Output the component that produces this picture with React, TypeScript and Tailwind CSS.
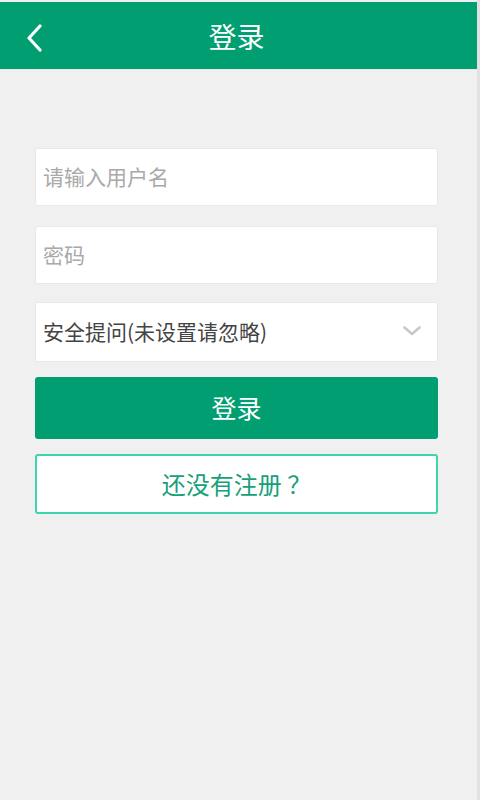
export default function App() {
  const font = { fontFamily: '"Noto Sans CJK SC", "Noto Sans", sans-serif' };

  return (
    <div className="flex h-[800px] w-[480px] bg-[#f0f0f0]" style={font}>
      <div className="flex w-[477px] flex-col pt-[2px]">
        {/* header */}
        <div className="relative flex h-[68px] items-center justify-center border-b border-[#e8e8e8] bg-[#009e71]">
          <button className="absolute left-[22px] top-[20px] flex h-[32px] w-[24px] items-center justify-center">
            <svg width="18" height="28" viewBox="0 0 18 28" fill="none">
              <path d="M15 2 L4 14 L15 26" stroke="white" strokeWidth="3.2" strokeLinecap="round" strokeLinejoin="round" />
            </svg>
          </button>
          <h1 className="ml-[-4px] text-[28px] leading-none text-white">登录</h1>
        </div>

        {/* form */}
        <div className="flex flex-col pl-[35px] pr-[39px] pt-[78px]">
          <div className="flex h-[58px] items-center rounded-[3px] border border-[#e8e8e8] bg-white px-[7px]">
            <input
              className="w-full bg-transparent text-[21px] text-[#333] outline-none placeholder:text-[#a9a9a9]"
              placeholder="请输入用户名"
            />
          </div>
          <div className="mt-[20px] flex h-[58px] items-center rounded-[3px] border border-[#e8e8e8] bg-white px-[7px]">
            <input
              type="password"
              className="w-full bg-transparent text-[21px] text-[#333] outline-none placeholder:text-[#a9a9a9]"
              placeholder="密码"
            />
          </div>
          <div className="mt-[18px] flex h-[60px] items-center justify-between rounded-[3px] border border-[#e8e8e8] bg-white pl-[7px] pr-[16px]">
            <span className="text-[21px] text-[#444]">安全提问(未设置请忽略)</span>
            <svg width="18" height="10" viewBox="0 0 18 10" fill="none" className="mb-[2px]">
              <path d="M1.5 1.5 L9 8 L16.5 1.5" stroke="#c8c8c8" strokeWidth="2.6" strokeLinecap="round" strokeLinejoin="round" />
            </svg>
          </div>

          <button className="mt-[15px] flex h-[62px] items-center justify-center rounded-[3px] bg-[#009e71] text-[25px] text-white">
            登录
          </button>
          <button className="mt-[15px] flex h-[60px] items-center justify-center rounded-[3px] border-2 border-[#3dd6ac] bg-white text-[24px] text-[#17a078]">
            还没有注册 ？
          </button>
        </div>
      </div>
      <div className="w-[3px] bg-[#e2e2e2]" />
    </div>
  );
}
